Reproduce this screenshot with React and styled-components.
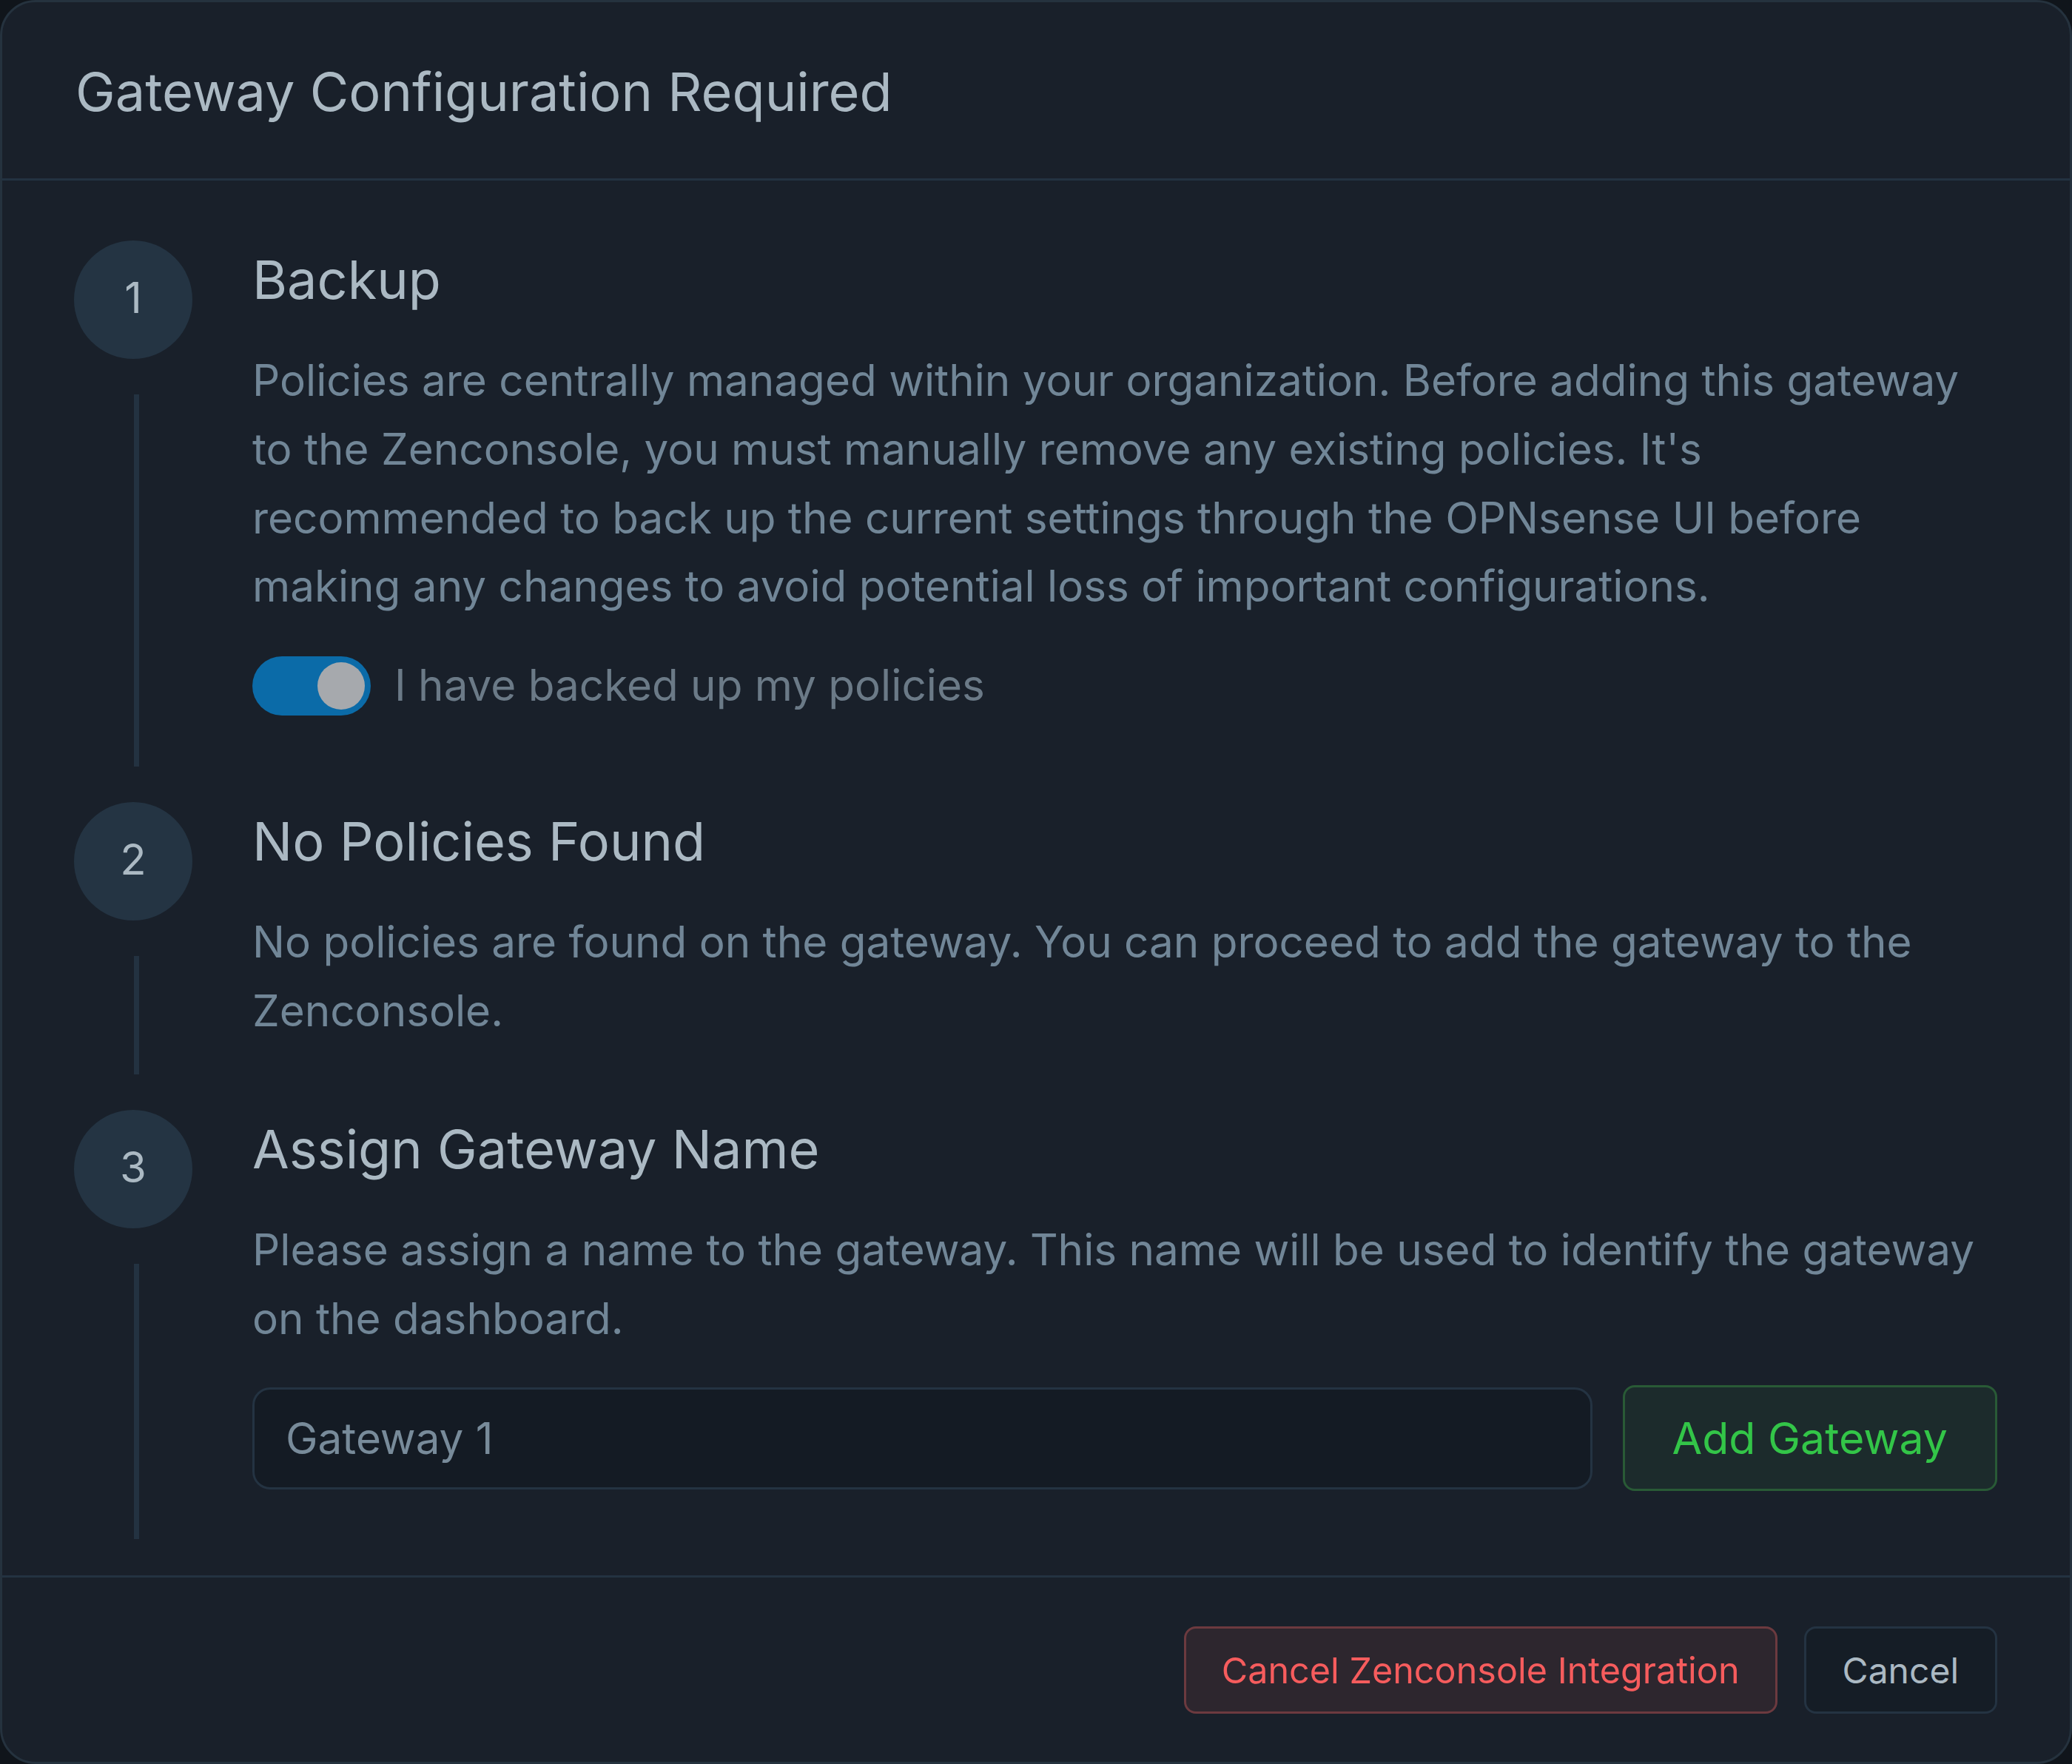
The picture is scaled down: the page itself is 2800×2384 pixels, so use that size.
import React from "react";
import styled, { createGlobalStyle } from "styled-components";

const Global = createGlobalStyle`
  html, body { margin: 0; padding: 0; background: #10151b; }
  body { font-family: Inter, "Noto Sans", sans-serif; -webkit-font-smoothing: antialiased; }
  * { box-sizing: border-box; }
`;

const Modal = styled.div`
  width: 2800px;
  height: 2384px;
  display: flex;
  flex-direction: column;
  background: #19202a;
  border: 3px solid #25323e;
  border-radius: 48px;
  overflow: hidden;
`;

const Header = styled.header`
  height: 241px;
  flex: none;
  display: flex;
  align-items: center;
  padding: 0 99px;
  border-bottom: 3px solid #233241;
`;

const Title = styled.h1`
  margin: 0;
  font-size: 72px;
  font-weight: 400;
  color: #abb9c3;
  line-height: 1.2;
  padding-top: 4px;
`;

const Body = styled.div`
  flex: 1;
  padding: 81px 98px 0 97px;
  display: flex;
  flex-direction: column;
`;

const Step = styled.section`
  display: grid;
  grid-template-columns: 160px 1fr;
  column-gap: 81px;
`;

const Rail = styled.div`
  display: flex;
  flex-direction: column;
  align-items: center;
`;

const Circle = styled.div`
  width: 160px;
  height: 160px;
  flex: none;
  border-radius: 50%;
  background: #243443;
  color: #abb9c3;
  font-size: 58px;
  display: flex;
  align-items: center;
  justify-content: center;
  padding-bottom: 6px;
`;

const Line = styled.div`
  flex: 1;
  width: 7px;
  margin: 48px 0 48px 8px;
  background: #233241;
`;

const Content = styled.div`
  padding: 11px 0 87px;
  display: flex;
  flex-direction: column;
`;

const StepTitle = styled.h2`
  margin: 0;
  font-size: 72px;
  line-height: 84px;
  font-weight: 400;
  color: #abb9c3;
`;

const Text = styled.p`
  margin: 48px 0 0;
  font-size: 58.4px;
  line-height: 92.8px;
  color: #718697;
`;

const Row = styled.div`
  display: flex;
  align-items: center;
  margin-top: ${(p) => p.$top}px;
  margin-bottom: ${(p) => p.$bottom}px;
  gap: ${(p) => p.$gap}px;
`;

const Track = styled.button`
  width: 160px;
  height: 80px;
  flex: none;
  border: none;
  padding: 8px;
  border-radius: 40px;
  background: #0b6ba8;
  display: flex;
  justify-content: flex-end;
  cursor: pointer;
`;

const Knob = styled.span`
  width: 64px;
  height: 64px;
  border-radius: 50%;
  background: #a6a9ad;
`;

const ToggleLabel = styled.span`
  font-size: 58.4px;
  color: #6b7a87;
  padding-bottom: 4px;
`;

const Input = styled.input`
  flex: 1;
  min-width: 0;
  height: 138px;
  border: 3px solid #243342;
  border-radius: 24px;
  background: #141b24;
  color: #788b9a;
  font-family: inherit;
  font-size: 58.4px;
  padding: 0 42px;
  outline: none;
`;

const Button = styled.button`
  flex: none;
  height: ${(p) => p.$h}px;
  padding: 0 ${(p) => p.$px}px;
  border: 3px solid ${(p) => p.$border};
  background: ${(p) => p.$bg};
  color: ${(p) => p.$color};
  border-radius: 16px;
  font-family: inherit;
  font-size: ${(p) => p.$fs}px;
  cursor: pointer;
`;

const Footer = styled.footer`
  flex: none;
  border-top: 3px solid #233241;
  padding: 66px 98px 65px;
  display: flex;
  justify-content: flex-end;
  gap: 36px;
`;

const steps = [
  {
    n: 1,
    title: "Backup",
    text:
      "Policies are centrally managed within your organization. Before adding this gateway to the Zenconsole, you must manually remove any existing policies. It's recommended to back up the current settings through the OPNsense UI before making any changes to avoid potential loss of important configurations.",
    extra: "toggle",
  },
  {
    n: 2,
    title: "No Policies Found",
    text: "No policies are found on the gateway. You can proceed to add the gateway to the Zenconsole.",
  },
  {
    n: 3,
    title: "Assign Gateway Name",
    text: "Please assign a name to the gateway. This name will be used to identify the gateway on the dashboard.",
    extra: "name",
  },
];

export default function App() {
  return (
    <>
      <Global />
      <Modal>
        <Header>
          <Title>Gateway Configuration Required</Title>
        </Header>
        <Body>
          {steps.map((s) => (
            <Step key={s.n}>
              <Rail>
                <Circle>{s.n}</Circle>
                <Line />
              </Rail>
              <Content>
                <StepTitle>{s.title}</StepTitle>
                <Text>{s.text}</Text>
                {s.extra === "toggle" && (
                  <Row $top={48} $bottom={30} $gap={32}>
                    <Track aria-pressed="true">
                      <Knob />
                    </Track>
                    <ToggleLabel>I have backed up my policies</ToggleLabel>
                  </Row>
                )}
                {s.extra === "name" && (
                  <Row $top={44} $bottom={26} $gap={41}>
                    <Input defaultValue="Gateway 1" />
                    <Button $h={143} $px={64} $fs={59} $border="#295a36" $bg="#1c2b2c" $color="#33c548">
                      Add Gateway
                    </Button>
                  </Row>
                )}
              </Content>
            </Step>
          ))}
        </Body>
        <Footer>
          <Button $h={118} $px={48} $fs={48.5} $border="#6c3a3f" $bg="#2d262e" $color="#f65c5d">
            Cancel Zenconsole Integration
          </Button>
          <Button $h={118} $px={49} $fs={48} $border="#243342" $bg="#151d26" $color="#abb9c3">
            Cancel
          </Button>
        </Footer>
      </Modal>
    </>
  );
}
